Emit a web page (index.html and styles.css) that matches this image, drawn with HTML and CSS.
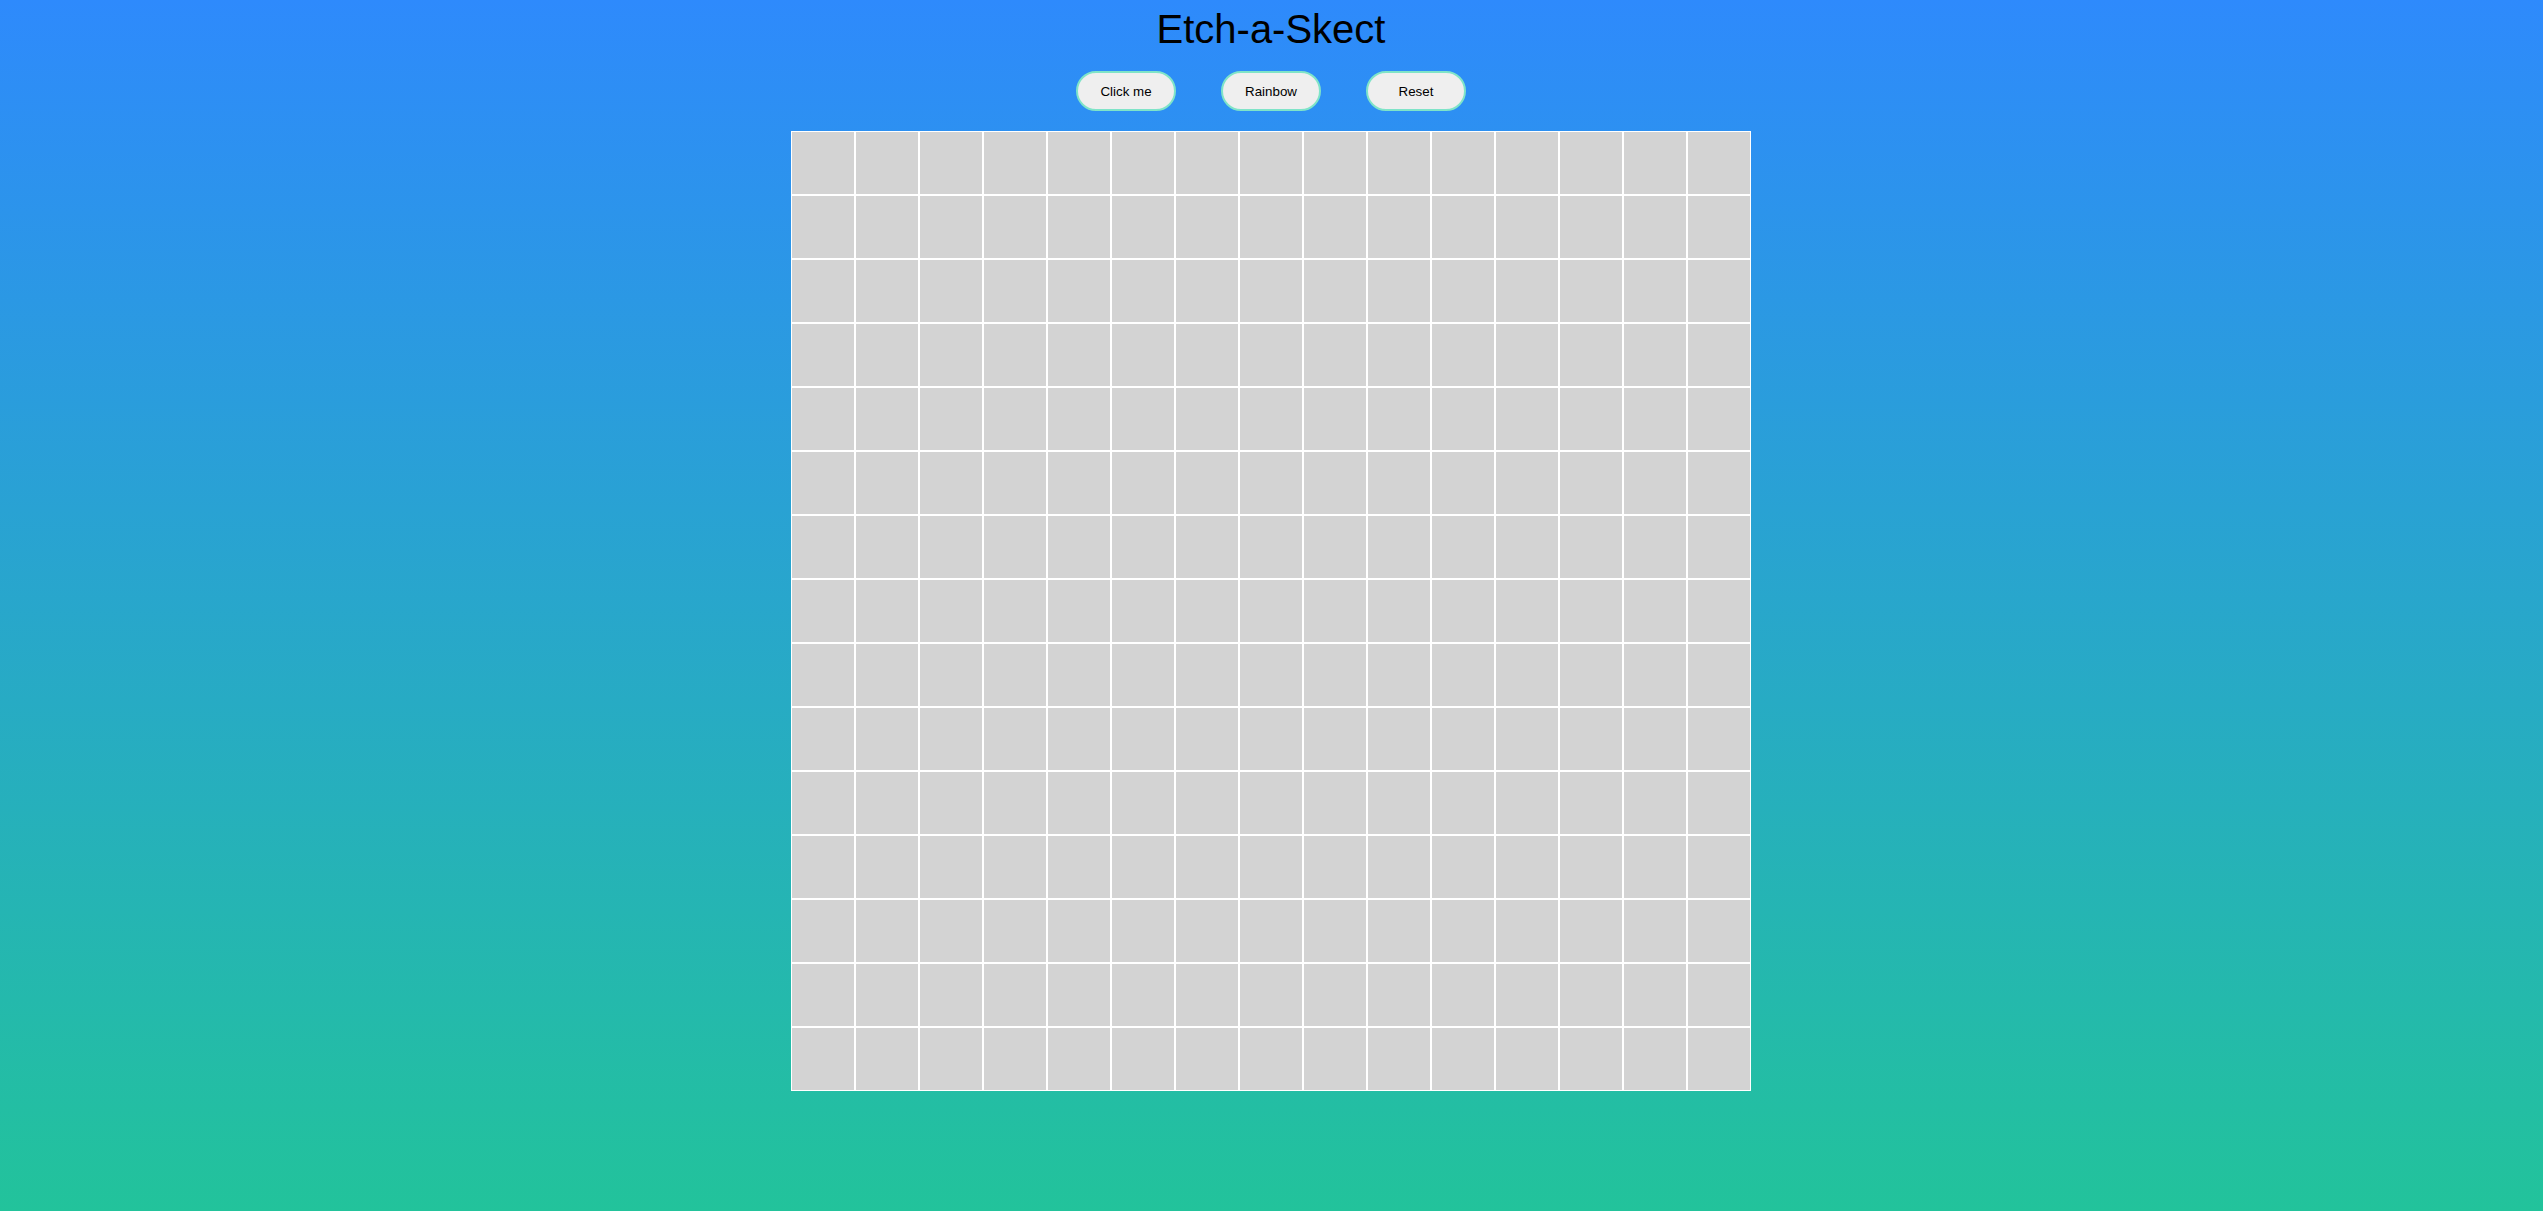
FILE: index.html
```html
<!DOCTYPE html>
<html lang="en">
<head>
<meta charset="utf-8">
<title>Etch-a-Skect</title>
<link rel="stylesheet" href="styles.css">
</head>
<body>
<main class="app">
  <h1 class="title">Etch-a-Skect</h1>
  <div class="controls">
    <button class="btn">Click me</button>
    <button class="btn">Rainbow</button>
    <button class="btn">Reset</button>
  </div>
  <div class="grid" id="grid"></div>
</main>
<script>
  var g = document.getElementById('grid');
  for (var i = 0; i < 225; i++) {
    var c = document.createElement('div');
    c.className = 'cell';
    g.appendChild(c);
  }
</script>
</body>
</html>
```
FILE: styles.css
```css
html, body {
  margin: 0;
  padding: 0;
  height: 100%;
}
body {
  background: linear-gradient(to bottom, #2e8afc 0%, #22c39b 100%);
  font-family: "Liberation Sans", Arial, sans-serif;
  min-height: 1211px;
}
.app {
  display: flex;
  flex-direction: column;
  align-items: center;
  padding-right: 1px;
}
.title {
  margin: 0;
  padding-top: 6px;
  font-size: 40px;
  font-weight: normal;
  line-height: 46px;
  color: #000;
}
.controls {
  display: flex;
  gap: 45px;
  margin-top: 19px;
}
.btn {
  width: 100px;
  height: 40px;
  border: 2px solid #7fe4c8;
  border-radius: 20px;
  background: #efefef;
  font-family: "Liberation Sans", Arial, sans-serif;
  font-size: 13.333px;
  color: #000;
  padding: 0;
}
.grid {
  margin-top: 20px;
  display: grid;
  grid-template-columns: repeat(15, 64px);
  grid-template-rows: repeat(15, 64px);
}
.cell {
  background: #d3d3d3;
  border: 1px solid #fff;
}
```
